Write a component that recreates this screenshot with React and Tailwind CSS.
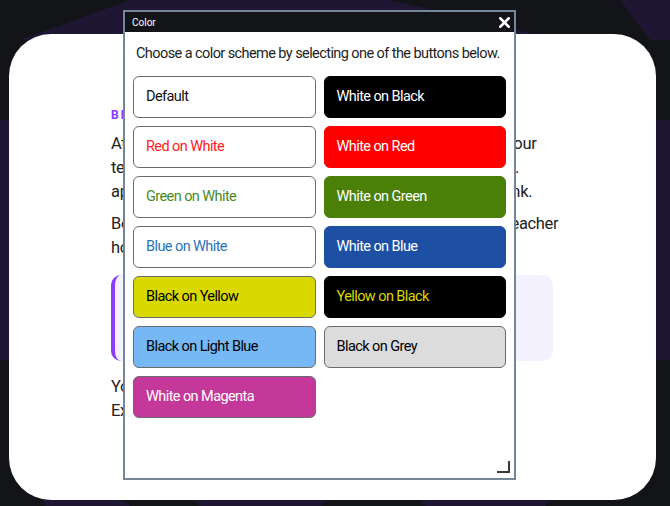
import { X } from 'lucide-react'

const schemes = [
  { label: 'Default', cls: 'bg-white text-[#111] border-[#6b6b6b]' },
  { label: 'White on Black', cls: 'bg-black text-white border-black' },
  { label: 'Red on White', cls: 'bg-white text-[#ff1a1a] border-[#6b6b6b]' },
  { label: 'White on Red', cls: 'bg-[#ff0000] text-white border-[#ff0000]' },
  { label: 'Green on White', cls: 'bg-white text-[#4a8a26] border-[#6b6b6b]' },
  { label: 'White on Green', cls: 'bg-[#4a8008] text-white border-[#4a8008]' },
  { label: 'Blue on White', cls: 'bg-white text-[#2a72b8] border-[#6b6b6b]' },
  { label: 'White on Blue', cls: 'bg-[#1d4fa3] text-white border-[#1d4fa3]' },
  { label: 'Black on Yellow', cls: 'bg-[#d9d900] text-black border-[#6b6b6b]' },
  { label: 'Yellow on Black', cls: 'bg-black text-[#d9d900] border-black' },
  { label: 'Black on Light Blue', cls: 'bg-[#75b8f5] text-black border-[#6b6b6b]' },
  { label: 'Black on Grey', cls: 'bg-[#dcdcdc] text-black border-[#6b6b6b]' },
  { label: 'White on Magenta', cls: 'bg-[#c4389a] text-white border-[#6b6b6b]' },
]

function Backdrop() {
  return (
    <svg className="absolute inset-0 h-full w-full" viewBox="0 0 670 506" preserveAspectRatio="none">
      <rect width="670" height="506" fill="#121417" />
      <polygon points="130,0 390,0 560,40 20,40" fill="#1f1633" />
      <polygon points="620,0 670,0 670,40 650,40" fill="#1f1633" />
      <polygon points="0,120 20,120 20,360 0,360" fill="#1f1633" />
      <polygon points="650,120 670,120 670,360 650,360" fill="#1f1633" />
      <polygon points="40,490 110,490 130,506 45,506" fill="#1f1633" />
      <polygon points="180,490 340,490 320,506 200,506" fill="#1f1633" />
      <polygon points="410,490 560,490 545,506 425,506" fill="#1f1633" />
    </svg>
  )
}

function ColorDialog() {
  return (
    <div className="absolute left-[123px] top-[10px] flex h-[470px] w-[393px] flex-col border-2 border-[#75869a] bg-white">
      <div className="flex h-[20px] items-center justify-between bg-[#121417] pl-[7px] pr-[1px]">
        <span className="text-[10px] text-white">Color</span>
        <X className="h-[17px] w-[17px] text-white" strokeWidth={3.5} />
      </div>
      <div className="px-[8px] pt-[12px]">
        <p className="whitespace-nowrap pl-[3px] text-[14.5px] leading-[20px] tracking-[-0.04em] text-[#1e1e1e]">
          Choose a color scheme by selecting one of the buttons below.
        </p>
        <div className="mt-[12px] grid grid-cols-2 gap-[8px]">
          {schemes.map(s => (
            <button
              key={s.label}
              className={`flex h-[42px] items-center rounded-[6px] border px-[12px] text-left text-[14.5px] tracking-[-0.04em] ${s.cls}`}
            >
              {s.label}
            </button>
          ))}
        </div>
      </div>
      <div className="absolute bottom-[5px] right-[4px] h-[12px] w-[13px] border-b-2 border-r-2 border-[#3a3a3a]" />
    </div>
  )
}

export default function App() {
  return (
    <div className="relative h-[506px] w-full overflow-hidden font-['Roboto',sans-serif]">
      <Backdrop />
      <div className="relative pl-[9px] pr-[14px] pt-[34px]">
        <div className="h-[466px] rounded-[42px] bg-white pl-[102px] pr-[103px] pt-[72px] text-[#222]">
          <h2 className="text-[12px] font-extrabold tracking-[0.16em] text-[#8b3dff]">BEFORE YOU BEGIN</h2>
          <p className="mt-[8px] whitespace-nowrap text-[16.5px] leading-[24px] tracking-[-0.02em]">
            At any time you can change the colours on this site to fit your
            <br />
            text and background needs using the Colour button above.
            <br />
            apply it to every lesson and quiz by clicking on the small link.
          </p>
          <p className="mt-[8px] whitespace-nowrap text-[16.5px] leading-[24px] tracking-[-0.02em]">
            Before you start, speak with your parent, carer or a class teacher
            <br />
            how you would like to read the lessons.
          </p>
          <div className="mt-[15px] h-[86px] rounded-[10px] border-l-4 border-[#8b3dff] bg-[#f5f2ff]" />
          <p className="mt-[14px] text-[16.5px] leading-[24px] tracking-[-0.02em]">
            You can change the colours again at any time.
            <br />
            Explore the options and find the one you like.
          </p>
        </div>
      </div>
      <ColorDialog />
    </div>
  )
}
